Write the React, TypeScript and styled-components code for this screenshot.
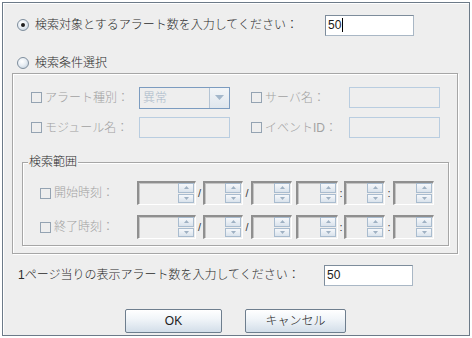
import styled, { createGlobalStyle } from "styled-components";

const GlobalStyle = createGlobalStyle`
  html, body {
    margin: 0;
    background: #ffffff;
  }
  body {
    font-family: "Liberation Sans", "Noto Sans CJK JP", sans-serif;
    font-size: 12px;
    font-weight: 300;
    color: #2b2b2b;
  }
`

const Frame = styled.div`
  box-sizing: border-box;
  margin: 2px 0 0 2px;
  width: 468px;
  height: 334px;
  background: #eeeeee;
  border: 1px solid #6c7a88;
  box-shadow: inset 1px 1px 0 #ffffff;
  display: flex;
  flex-direction: column;
`

const RadioRow = styled.div<{ $top: number }>`
  display: flex;
  align-items: center;
  margin-top: ${p => p.$top}px;
  padding-left: 14px;
  height: 20px;
`

const Radio = styled.span<{ $checked?: boolean }>`
  box-sizing: border-box;
  width: 12px;
  height: 12px;
  border-radius: 50%;
  border: 1px solid #7f8e9d;
  background: radial-gradient(circle at 40% 35%, #ffffff 0%, #e8eef4 45%, #bccad8 100%);
  display: flex;
  align-items: center;
  justify-content: center;
  margin-right: 6px;
  &::after {
    content: "";
    width: 4px;
    height: 4px;
    border-radius: 50%;
    background: ${p => (p.$checked ? "#1e1e1e" : "transparent")};
  }
`

const Label = styled.span<{ $w?: number; $disabled?: boolean }>`
  display: inline-block;
  width: ${p => (p.$w ? `${p.$w}px` : "auto")};
  color: ${p => (p.$disabled ? "#a2a2a2" : "#2b2b2b")};
  line-height: 16px;
  white-space: nowrap;
`

const TextBox = styled.div<{ $w: number; $h?: number }>`
  box-sizing: border-box;
  width: ${p => p.$w}px;
  height: ${p => p.$h ?? 21}px;
  background: #ffffff;
  border: 1px solid #a9b7c5;
  border-top-color: #7d8c9b;
  border-left-color: #7d8c9b;
  display: flex;
  align-items: center;
  padding-left: 2px;
  font-family: "Liberation Sans", sans-serif;
  font-size: 12px;
  font-weight: 400;
  color: #1a1a1a;
`

const Caret = styled.span`
  width: 1px;
  height: 14px;
  background: #000000;
  margin-left: 1px;
`

const Panel = styled.div`
  box-sizing: border-box;
  margin: 0 0 0 9px;
  width: 446px;
  height: 181px;
  border: 1px solid #a6a6a6;
  box-shadow: inset 1px 1px 0 #ffffff, 1px 1px 0 #ffffff;
  padding: 13px 0 0 9px;
  display: flex;
  flex-direction: column;
`

const CondRow = styled.div<{ $top?: number }>`
  display: flex;
  align-items: center;
  height: 21px;
  padding-left: 9px;
  margin-top: ${p => p.$top ?? 0}px;
`

const CheckCell = styled.div<{ $w: number }>`
  display: flex;
  align-items: center;
  width: ${p => p.$w}px;
  flex-shrink: 0;
`

const Check = styled.span`
  box-sizing: border-box;
  width: 11px;
  height: 11px;
  border: 1px solid #94a3b2;
  background: #eeeeee;
  margin-right: 3px;
  flex-shrink: 0;
`

const Disabled = styled.div<{ $w: number }>`
  box-sizing: border-box;
  width: ${p => p.$w}px;
  height: 21px;
  border: 1px solid #b9cde0;
  background: #eeeeee;
  flex-shrink: 0;
`

const Spacer = styled.div<{ $w: number }>`
  width: ${p => p.$w}px;
  flex-shrink: 0;
`

const Combo = styled.div`
  box-sizing: border-box;
  width: 91px;
  height: 22px;
  display: flex;
  border: 1px solid #7c9cc0;
  background: #eeeeee;
  flex-shrink: 0;
`

const ComboText = styled.div`
  flex: 1;
  padding-left: 3px;
  line-height: 20px;
  color: #a9b8c8;
  border-right: 1px solid #b4c4d4;
`

const ComboButton = styled.div`
  width: 19px;
  display: flex;
  align-items: center;
  justify-content: center;
  background: linear-gradient(#f2f5f8, #dfe6ed);
`

const Group = styled.fieldset`
  box-sizing: border-box;
  margin: 17px 0 0 0;
  width: 427px;
  padding: 12px 0 6px 0;
  border: 1px solid #a6a6a6;
  box-shadow: inset 1px 1px 0 #ffffff, 1px 1px 0 #ffffff;
  min-width: 0;
`

const Legend = styled.legend`
  margin-left: 5px;
  padding: 0 1px;
  line-height: 14px;
  background: #eeeeee;
  color: #2b2b2b;
`

const TimeRow = styled.div<{ $top?: number }>`
  display: flex;
  align-items: center;
  height: 24px;
  padding-left: 17px;
  margin-top: ${p => p.$top ?? 0}px;
`

const Spinner = styled.div<{ $w: number }>`
  box-sizing: border-box;
  width: ${p => p.$w}px;
  height: 24px;
  display: flex;
  justify-content: flex-end;
  border-top: 2px solid #8f8f8f;
  border-left: 2px solid #8f8f8f;
  border-bottom: 1px solid #ffffff;
  border-right: 1px solid #ffffff;
  box-shadow: inset 1px 1px 0 #c4c4c4;
  background: #eeeeee;
  padding: 0 1px 1px 0;
  flex-shrink: 0;
`

const SpinButtons = styled.div`
  width: 16px;
  display: flex;
  flex-direction: column;
  gap: 1px;
`

const SpinButton = styled.div`
  box-sizing: border-box;
  flex: 1;
  border: 1px solid #a9bccf;
  background: linear-gradient(#f6f8fb, #dae3ec);
  display: flex;
  align-items: center;
  justify-content: center;
`

const Sep = styled.span<{ $w: number }>`
  width: ${p => p.$w}px;
  text-align: center;
  color: #3c3c3c;
  font-family: "Liberation Sans", sans-serif;
  font-size: 11px;
  flex-shrink: 0;
`

const BottomRow = styled.div`
  display: flex;
  align-items: center;
  height: 20px;
  margin-top: 11px;
  padding-left: 15px;
`

const ButtonRow = styled.div`
  display: flex;
  gap: 23px;
  margin-top: 24px;
  padding-left: 122px;
`

const Button = styled.button<{ $w: number }>`
  box-sizing: border-box;
  width: ${p => p.$w}px;
  height: 24px;
  border: 1px solid #6e7e8e;
  border-radius: 2px;
  background: linear-gradient(#ffffff 0%, #f1f5f9 40%, #d3dee9 100%);
  font-family: "Liberation Sans", "Noto Sans CJK JP", sans-serif;
  font-size: 12px;
  font-weight: 300;
  color: #222222;
  padding: 0;
  line-height: 22px;
`

function Arrow({ up }: { up?: boolean }) {
  return (
    <svg width="5" height="3" viewBox="0 0 5 3">
      <path d={up ? "M0 3 L2.5 0 L5 3 Z" : "M0 0 L2.5 3 L5 0 Z"} fill="#9fb1c3" />
    </svg>
  )
}

function Spin({ w }: { w: number }) {
  return (
    <Spinner $w={w}>
      <SpinButtons>
        <SpinButton><Arrow up /></SpinButton>
        <SpinButton><Arrow /></SpinButton>
      </SpinButtons>
    </Spinner>
  )
}

function TimeFields() {
  return (
    <>
      <Spin w={59} />
      <Sep $w={7}>/</Sep>
      <Spin w={40} />
      <Sep $w={8}>/</Sep>
      <Spin w={41} />
      <Spacer $w={4} />
      <Spin w={42} />
      <Sep $w={6}>:</Sep>
      <Spin w={41} />
      <Sep $w={8}>:</Sep>
      <Spin w={41} />
    </>
  )
}

export default function App() {
  return (
    <>
      <GlobalStyle />
      <Frame>
        <RadioRow $top={12}>
          <Radio $checked />
          <Label $w={290}>検索対象とするアラート数を入力してください：</Label>
          <TextBox $w={89} $h={21}>50<Caret /></TextBox>
        </RadioRow>

        <RadioRow $top={18}>
          <Radio />
          <Label>検索条件選択</Label>
        </RadioRow>

        <Panel>
          <CondRow>
            <CheckCell $w={108}>
              <Check />
              <Label $disabled>アラート種別：</Label>
            </CheckCell>
            <Combo>
              <ComboText>異常</ComboText>
              <ComboButton>
                <svg width="9" height="5" viewBox="0 0 9 5">
                  <path d="M0 0 L4.5 5 L9 0 Z" fill="#a3b7cb" />
                </svg>
              </ComboButton>
            </Combo>
            <Spacer $w={21} />
            <CheckCell $w={98}>
              <Check />
              <Label $disabled>サーバ名：</Label>
            </CheckCell>
            <Disabled $w={91} />
          </CondRow>

          <CondRow $top={9}>
            <CheckCell $w={108}>
              <Check />
              <Label $disabled>モジュール名：</Label>
            </CheckCell>
            <Disabled $w={91} />
            <Spacer $w={21} />
            <CheckCell $w={98}>
              <Check />
              <Label $disabled>イベントID：</Label>
            </CheckCell>
            <Disabled $w={91} />
          </CondRow>

          <Group>
            <Legend>検索範囲</Legend>
            <TimeRow>
              <CheckCell $w={97}>
                <Check />
                <Label $disabled>開始時刻：</Label>
              </CheckCell>
              <TimeFields />
            </TimeRow>
            <TimeRow $top={10}>
              <CheckCell $w={97}>
                <Check />
                <Label $disabled>終了時刻：</Label>
              </CheckCell>
              <TimeFields />
            </TimeRow>
          </Group>
        </Panel>

        <BottomRow>
          <Label $w={306}>1ページ当りの表示アラート数を入力してください：</Label>
          <TextBox $w={89} $h={21}>50</TextBox>
        </BottomRow>

        <ButtonRow>
          <Button $w={97}>OK</Button>
          <Button $w={101}>キャンセル</Button>
        </ButtonRow>
      </Frame>
    </>
  )
}
